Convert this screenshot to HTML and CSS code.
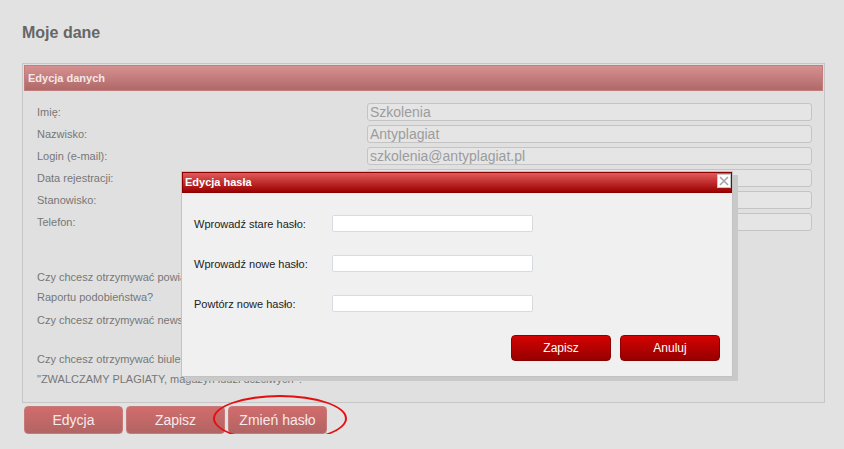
FILE: index.html
```html
<!DOCTYPE html>
<html lang="pl">
<head>
  <meta charset="UTF-8">
  <meta name="viewport" content="width=device-width, initial-scale=1.0">
  <title>Moje dane</title>
  <link rel="stylesheet" href="styles.css">
</head>
<body>
  <div class="page">
    <h1>Moje dane</h1>

    <div class="panel">
      <div class="panel-head">Edycja danych</div>
      <div class="panel-body">
        <div class="fields">
          <label>Imię:</label>
          <input type="text" value="Szkolenia" disabled>
          <label>Nazwisko:</label>
          <input type="text" value="Antyplagiat" disabled>
          <label>Login (e-mail):</label>
          <input type="text" value="szkolenia@antyplagiat.pl" disabled>
          <label>Data rejestracji:</label>
          <input type="text" value="" disabled>
          <label>Stanowisko:</label>
          <input type="text" value="" disabled>
          <label>Telefon:</label>
          <input type="text" value="" disabled>
        </div>

        <div class="questions">
          <p class="q1">Czy chcesz otrzymywać powiadomienia o wygenerowaniu<br>Raportu podobieństwa?</p>
          <p class="q2">Czy chcesz otrzymywać newsletter Antyplagiat?</p>
          <p class="q3">Czy chcesz otrzymywać biuletyn<br>"ZWALCZAMY PLAGIATY, magazyn ludzi uczciwych"?</p>
        </div>
      </div>
    </div>

    <div class="actions">
      <button class="btn-soft">Edycja</button>
      <button class="btn-soft">Zapisz</button>
      <button class="btn-soft">Zmień hasło</button>
    </div>

    <!-- highlight around the password button -->
    <div class="marker"></div>

    <!-- password dialog -->
    <div class="dialog">
      <div class="dialog-head">
        Edycja hasła
        <span class="dialog-close">
          <svg width="12" height="12" viewBox="0 0 12 12">
            <path d="M2 2 L10 10 M10 2 L2 10" stroke="#a4a4a4" stroke-width="1.6" fill="none"/>
          </svg>
        </span>
      </div>
      <div class="dialog-body">
        <div class="pass-row">
          <label for="oldPass">Wprowadź stare hasło:</label>
          <input type="password" id="oldPass">
        </div>
        <div class="pass-row">
          <label for="newPass">Wprowadź nowe hasło:</label>
          <input type="password" id="newPass">
        </div>
        <div class="pass-row">
          <label for="newPass2">Powtórz nowe hasło:</label>
          <input type="password" id="newPass2">
        </div>
        <div class="dialog-buttons">
          <button class="btn-red">Zapisz</button>
          <button class="btn-red">Anuluj</button>
        </div>
      </div>
    </div>
  </div>
</body>
</html>
```

FILE: styles.css
```css
body {
  margin: 0;
  background-color: #e2e2e2;
  font-family: "Liberation Sans", Arial, sans-serif;
}
.page {
  position: relative;
  padding: 24px 19px 0 22px;
}
h1 {
  margin: 0;
  font-size: 16px;
  line-height: 18px;
  color: #666;
}
.panel {
  margin-top: 21px;
  border: 1px solid #c6c6c6;
  padding: 1px;
  background-color: #e0e0e0;
}
.panel-head {
  height: 24px;
  line-height: 24px;
  padding-left: 3px;
  border: 1px solid #c27c7c;
  background: linear-gradient(#d69090, #b06969);
  color: #f5e6e6;
  font-size: 11px;
  font-weight: bold;
}
.panel-body {
  padding: 12px 12px 12px 12px;
}
.fields {
  display: grid;
  grid-template-columns: 331px 445px;
  row-gap: 4px;
  align-items: center;
}
.fields label {
  padding-left: 1px;
  font-size: 11px;
  color: #777;
}
.fields input {
  height: 18px;
  box-sizing: border-box;
  padding: 0 2px;
  border: 1px solid #c4c4c4;
  border-radius: 3px;
  background-color: #e5e5e5;
  font-family: "Liberation Sans", Arial, sans-serif;
  font-size: 14px;
  color: #9c9c9c;
}
.questions {
  margin-top: 36px;
  padding-left: 1px;
  font-size: 11px;
  line-height: 20px;
  color: #777;
}
.questions p {
  margin: 0;
}
.q2 {
  margin-top: 3px !important;
}
.q3 {
  margin-top: 19px !important;
}
.actions {
  display: flex;
  gap: 3px;
  margin: 3px 0 0 2px;
}
.btn-soft {
  width: 99px;
  height: 28px;
  border: 1px solid #c77a7a;
  border-radius: 4px;
  background: linear-gradient(#d26c6c, #b26464);
  color: #f6eaea;
  font-family: "Liberation Sans", Arial, sans-serif;
  font-size: 14px;
  padding: 0;
}
.marker {
  position: absolute;
  left: 213px;
  top: 395px;
  width: 130px;
  height: 43px;
  border: 2px solid #e41010;
  border-radius: 50%;
}
.dialog {
  position: absolute;
  left: 181px;
  top: 171px;
  width: 550px;
  height: 204px;
  border: 1px solid #c2c2c2;
  background-color: #f0f0f0;
  box-shadow: 5px 4px 0 #c9c9c9;
}
.dialog-head {
  position: relative;
  height: 19px;
  line-height: 19px;
  padding-left: 2px;
  border: 1px solid #8c0000;
  background: linear-gradient(#e25a5a, #9c0000);
  color: #fff;
  font-size: 11px;
  font-weight: bold;
}
.dialog-close {
  position: absolute;
  right: 0;
  top: 1px;
  width: 12px;
  height: 12px;
  border: 1px solid #c8c8c8;
  background-color: #fff;
  display: flex;
  align-items: center;
  justify-content: center;
}
.dialog-body {
  padding: 22px 12px 0 12px;
}
.pass-row {
  display: flex;
  align-items: center;
  height: 17px;
  margin-bottom: 23px;
}
.pass-row label {
  width: 138px;
  font-size: 11px;
  color: #222;
}
.pass-row input {
  width: 201px;
  height: 17px;
  box-sizing: border-box;
  border: 1px solid #d6dbe3;
  border-radius: 2px;
  background-color: #fff;
}
.dialog-buttons {
  display: flex;
  justify-content: flex-end;
  gap: 9px;
  margin-top: 2px;
}
.btn-red {
  width: 100px;
  height: 26px;
  border: 1px solid #8c0000;
  border-radius: 4px;
  background: linear-gradient(#d40202, #960000);
  color: #fff;
  font-family: "Liberation Sans", Arial, sans-serif;
  font-size: 12px;
  padding: 0;
}
```
